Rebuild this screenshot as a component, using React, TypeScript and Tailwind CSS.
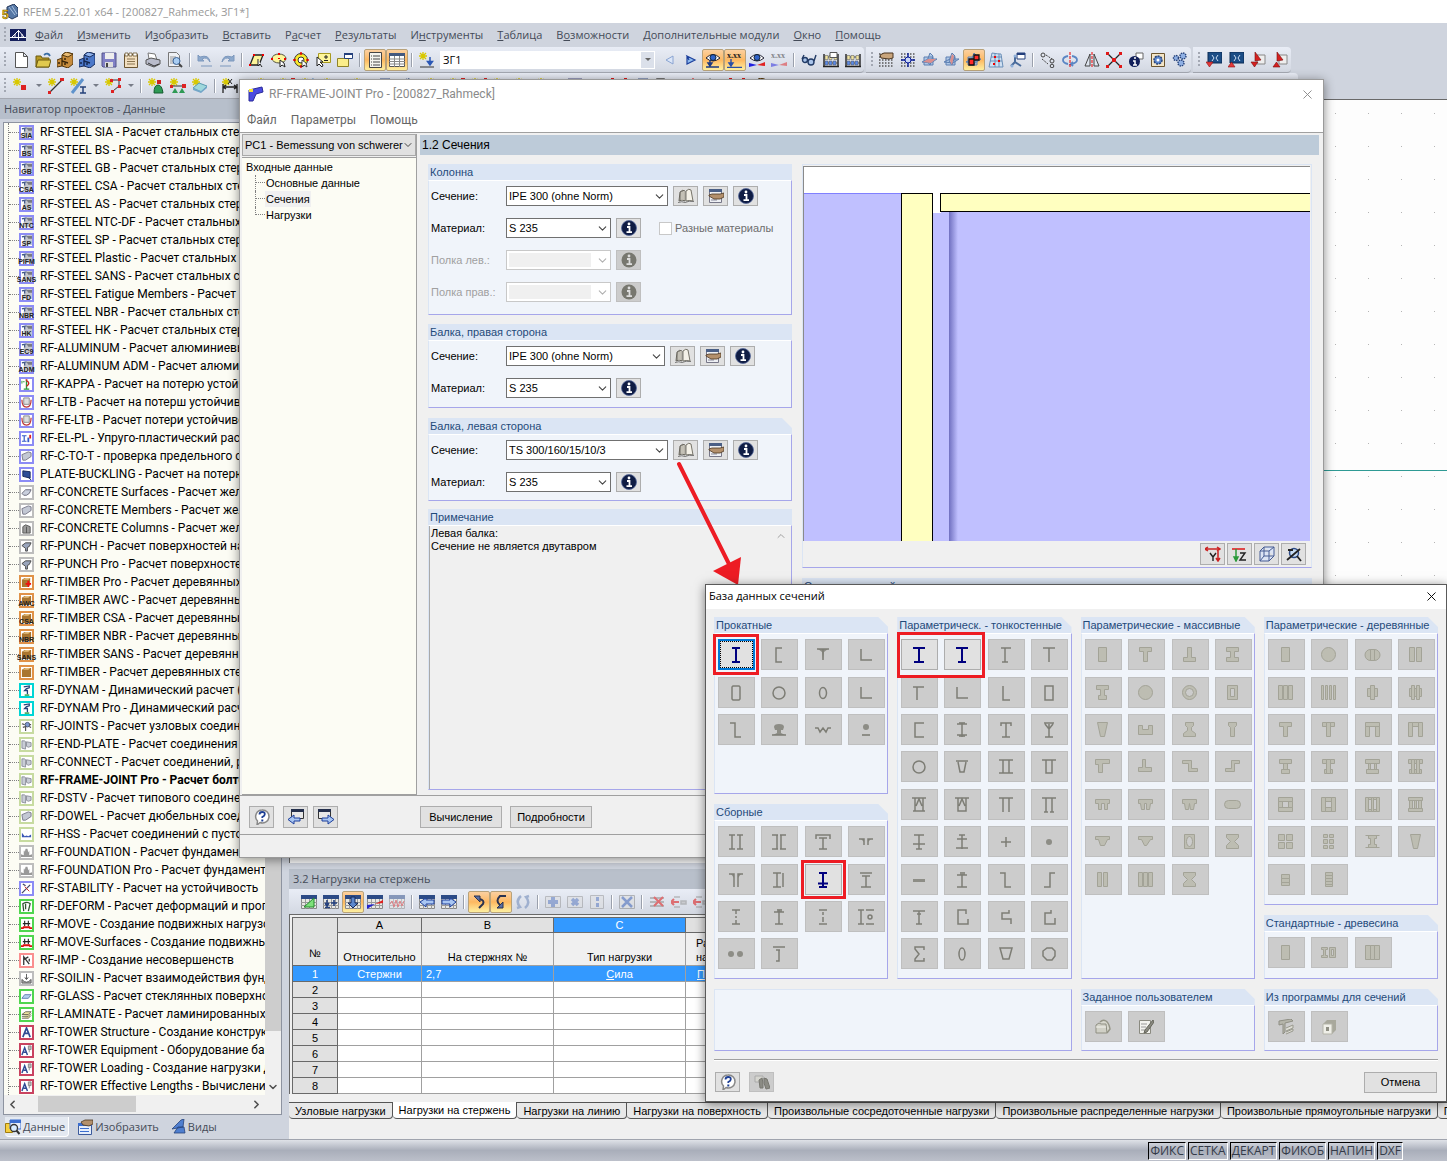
import React from 'react';
import { ChevronDown, ChevronLeft, ChevronRight, ChevronUp, X } from 'lucide-react';

/* ---------- toolbar glyphs, 16x16 ---------- */

const star = <path d="M4 0v8M0 4h8M1 1l6 6M7 1L1 7" stroke="#d8c800" strokeWidth="1.3" />;
const eye = (
  <>
    <path d="M1 6Q8-1 15 6Q8 12 1 6Z" fill="#fff" stroke="#223" />
    <circle cx="8" cy="5.5" r="3" fill="#2f62c8" stroke="#123" />
  </>
);
const sheet = (
  <>
    <path d="M.5 1.5h15v13h-15z" fill="#e8e8e4" stroke="#888" />
    <path d="M0 1h16v4H0z" fill="#2b4a86" />
    <path d="M0 8.5h16M0 11.5h16M4.500 5v10M8.500 5v10M12.500 5v10" stroke="#9a9a9a" />
  </>
);
const abacus = (
  <>
    <path d="M1 2v13M15 2v13M0 14.500h16" stroke="#222" strokeWidth="1.4" />
    <path d="M1 5h14M1 11h14" stroke="#444" />
    <g stroke="#555" strokeWidth=".5">
      <path d="M2 3.500h3v4H2zM6 3.500h3v4H6zM11 3.500h3v4h-3z" fill="#f0e3a0" />
      <path d="M2 9h3v4H2zM6 9h3v4H6zM10 9h3v4h-3z" fill="#5b8be8" />
    </g>
  </>
);
const dotGrid = <path d="M1 2h15M1 5h15M1 8h15M1 11h15M1 14h15" stroke="#555" strokeWidth="1.4" strokeDasharray="1.5 1.500" />;
const plane = (
  <path d="M2 5h9v8H2zM5 9l3-8 3 3-3 9zM0 10l6-3h9l-6 4z" fill="#9dbde6" fillOpacity=".7" stroke="#5c7fb2" />
);
const monitor = <path d="M2 0h14v11H2z" fill="#1b4d86" stroke="#0d2c55" />;

const icons: Record<string, React.ReactNode> = {
  new: <path d="M2.500.5h8l4 4v11h-12zM10.500.5v4h4" fill="#fff" stroke="#555" />,
  open: (
    <>
      <path d="M1 4h5l1 2h7v9H1z" fill="#b79a24" stroke="#6c5a10" />
      <path d="M1 15l2-7h13l-2 7z" fill="#e0c94e" stroke="#6c5a10" />
      <path d="M9 3q4-3 6 1" stroke="#3a6ea5" strokeWidth="1.8" fill="none" />
    </>
  ),
  drawer: (
    <>
      <path d="M0 8l5-2v8l-5 1zM5 3l4-3 7 2v10l-5 4-6-2z" fill="#c78c3c" stroke="#54380f" />
      <path d="M5 3l6 2 5-3-7-2z" fill="#e8bb74" stroke="#54380f" />
      <path d="M5 9l6 2M7 7h2M7 12h2M1 11h2" stroke="#3a2508" strokeWidth="1.400" />
    </>
  ),
  drawerBlue: (
    <>
      <path d="M0 8l5-2v8l-5 1zM5 3l4-3 7 2v10l-5 4-6-2z" fill="#4b78c9" stroke="#1a2f5e" />
      <path d="M5 3l6 2 5-3-7-2z" fill="#8fb2ec" stroke="#1a2f5e" />
      <path d="M5 9l6 2M7 7h2M7 12h2M1 11h2" stroke="#14264e" strokeWidth="1.400" />
    </>
  ),
  save: (
    <>
      <path d="M1 1h14v14H2l-1-1z" fill="#8181c6" stroke="#55558c" />
      <path d="M4 1h9v6H4z" fill="#eee" />
      <path d="M4 10h8v5H4z" fill="#ddd" />
      <path d="M5 11h2v4H5z" fill="#444" />
    </>
  ),
  clipboard: (
    <>
      <path d="M1.500 2.500h13v13h-13z" fill="#f2dfc0" stroke="#6b5530" />
      <path d="M2 1h3v3H2zM6 1h3v3H6zM10 1h4v3h-4z" fill="#fff" stroke="#6b5530" strokeWidth=".8" />
      <path d="M4 7h8M4 9.500h8M4 12h8" stroke="#8a7550" />
    </>
  ),
  print: (
    <>
      <path d="M3 1l7 1 2 6-8-1z" fill="#fff" stroke="#777" />
      <path d="M1 8l5-2 9 2v4l-6 3-8-3z" fill="#b9bccb" stroke="#555" />
      <path d="M3 11l6 3 5-2" stroke="#333" fill="none" />
    </>
  ),
  preview: (
    <>
      <path d="M1.500.5h8l3 3v11h-11z" fill="#eef0f4" stroke="#777" />
      <path d="M3 5h6M3 7h4M3 9h3M3 11h4" stroke="#999" />
      <circle cx="9.500" cy="9" r="3.500" fill="#a9cdf2" stroke="#3b6294" />
      <path d="M12 12l3 3" stroke="#444" strokeWidth="2" />
    </>
  ),
  dataTab: (
    <>
      <path d="M.5 4.500h7v9h-7z" fill="#f6cf3e" stroke="#a07c10" />
      <path d="M5 1h11v9H5z" fill="#e6eefb" stroke="#3b6ed0" />
      <path d="M5 1h11v3H5z" fill="#3b6ed0" />
      <circle cx="9" cy="9" r="3.500" fill="#d8ecff" stroke="#333" strokeWidth="1.300" />
      <path d="M11.500 11.500l3 3.500" stroke="#333" strokeWidth="2" />
    </>
  ),
  drawTab: (
    <>
      <path d="M1.500 4.500h13v11h-13z" fill="#e6eefb" stroke="#3b5a9c" />
      <path d="M1 4h14v3H1z" fill="#3b6ed0" />
      <path d="M3 9.500h9M3 12.500h9" stroke="#3b6ed0" />
      <path d="M4 3l4-2h8v4l-4 2-6-1z" fill="#b3906c" stroke="#4a3520" strokeWidth=".8" />
    </>
  ),
  undo: <path d="M1 3v6h6L5 7q5-3 8 3-1-8-10-5zM4 14h11" fill="#8da9cc" stroke="#7d98bd" />,
  redo: <path d="M15 3v6H9l2-2Q6 4 3 10 4 2 13 5zM1 14h11" fill="#8da9cc" stroke="#7d98bd" />,
  parallelogram: (
    <>
      <path d="M5 3h9l-4 10H1z" fill="#fdf59a" stroke="#222" strokeWidth="1.300" />
      <path d="M4 2h2v2H4zM13 2h2v2h-2zM0 12h2v2H0z" fill="#e00" />
      <path d="M9 7v7l2-2 2 3" fill="#fff" stroke="#222" />
    </>
  ),
  lasso: (
    <>
      <ellipse cx="8" cy="6.500" rx="7" ry="4.500" fill="#fdf59a" stroke="#554" />
      <path d="M7 1h2v2H7zM7 6h2v1H7zM0 6h2v2H0zM13 6h2v2h-2z" fill="#e00" />
      <path d="M9 8v7l2-2 3 2-1-4z" fill="#fff" stroke="#222" />
    </>
  ),
  target: (
    <>
      <circle cx="8" cy="8" r="6.500" fill="#fbe92a" stroke="#333" />
      <circle cx="8" cy="8" r="3" fill="#fff" stroke="#333" />
      <path d="M8 0v3M8 13v3M0 8h3M13 8h3" stroke="#e00" strokeWidth="1.500" />
      <path d="M9 8v7l2-2 3 2-1-4z" fill="#fff" stroke="#222" strokeWidth=".8" />
    </>
  ),
  selectBox: (
    <>
      <path d="M3.500 1.500h12v9h-12z" fill="#fdf59a" stroke="#a89a20" />
      <path d="M9 5h4M11 3v4M9 8.500h4" stroke="#222" />
      <path d="M2 5v9l2-2 3 3 1-2-3-3h3z" fill="#fff" stroke="#222" />
    </>
  ),
  newWindow: (
    <>
      <path d="M.5 6.500h11v8H.5z" fill="#fbee8a" stroke="#8f8328" />
      <path d="M7.500 1.500h8v5h-8z" fill="#fff" stroke="#24407d" />
      <path d="M7 1h9v2H7z" fill="#24407d" />
    </>
  ),
  listPane: (
    <>
      <path d="M2.500.5h12v15h-12z" fill="#f4f4ee" stroke="#444" />
      <path d="M4 4h1M4 7h1M4 10h1M4 13h1M6 4h7M6 7h7M6 10h7M6 13h7" stroke="#444" />
    </>
  ),
  tablePane: (
    <>
      <path d="M.5 1.500h15v13H.5z" fill="#fff" stroke="#555" />
      <path d="M0 1h16v3H0z" fill="#44597f" />
      <path d="M0 7h16M0 9.500h16M0 12h16M5.500 4v11M10.500 4v11" stroke="#888" />
    </>
  ),
  newLoad: (
    <>
      {star}
      <path d="M11 5v7M8.500 9.500L11 13l2.500-3.500z" stroke="#2a57b5" fill="#2a57b5" strokeWidth="1.500" />
      <path d="M1 15h14" stroke="#333" />
    </>
  ),
  prev: <path d="M12 4v8L5 8z" fill="#dbe6f8" stroke="#8aa4d2" />,
  next: <path d="M4 4v8l8-4-8-4 2 4z" fill="#8fbcf0" stroke="#1c3f9c" strokeWidth="1.200" />,
  eyeLoad: (
    <>
      {eye}
      <path d="M5 8v5M3 11l2 3 2-3zM1 15h13" stroke="#1d3a80" strokeWidth="1.400" />
    </>
  ),
  valueLoad: (
    <>
      <text x="0" y="6" fontSize="8" fontWeight="700" fontFamily="Liberation Serif, serif" fill="#222">x.xx</text>
      <path d="M4 7v6M2 11l2 3 2-3zM0 15.500h15" stroke="#2a4fa5" strokeWidth="1.400" />
    </>
  ),
  eyeResult: (
    <>
      {eye}
      <path d="M0 15v-4l8 2z" fill="#2222e0" />
      <path d="M16 10v4l-8-1z" fill="#e02222" />
    </>
  ),
  valueResult: (
    <g opacity=".5">
      <text x="0" y="6" fontSize="8" fontWeight="700" fontFamily="Liberation Serif, serif" fill="#222">x.xx</text>
      <path d="M0 15v-4l8 2z" fill="#2222e0" />
      <path d="M16 10v4l-8-1z" fill="#e02222" />
    </g>
  ),
  glasses: (
    <g fill="#a9c4ea" stroke="#223b66" strokeWidth="1.400">
      <circle cx="4" cy="8" r="2.500" />
      <circle cx="10" cy="10" r="3" />
      <path d="M1 7l2-4M13 9l2-6" />
    </g>
  ),
  abacusSheet: (
    <>
      {abacus}
      <path d="M7 .5h7v5H7z" fill="#fff" stroke="#555" />
    </>
  ),
  abacus,
  handGrid: (
    <>
      {dotGrid}
      <path d="M2 3l4-2h9v5l-4 1-8-1z" fill="#c9a57c" stroke="#4a3520" />
    </>
  ),
  snapGrid: (
    <>
      {dotGrid}
      <path d="M8 1v14M1 8h14" stroke="#0b1f9c" strokeWidth="1.400" />
      <circle cx="8" cy="8" r="3" fill="#c9d6f5" stroke="#0b1f9c" />
    </>
  ),
  planeXY: (
    <>
      {plane}
      <path d="M1 10l5-3h8l-5 4z" fill="#d98f8f" />
    </>
  ),
  planeYZ: (
    <>
      {plane}
      <path d="M6 9l2-7 2 2-2 9z" fill="#d98f8f" />
    </>
  ),
  planeXZ: (
    <>
      {plane}
      <path d="M3 7h5v6H3zM8 3h5v5H8z" fill="#ff2b2b" stroke="#111" strokeWidth="1.300" />
    </>
  ),
  surfaceGrid: (
    <>
      <path d="M4 1q6 1 9 1l2 13H1zM3 5h11M2 9h12M7 1v14M11 2v13" fill="#cfe0f2" stroke="#6a8fb8" />
      <path d="M6 4h2v2H6zM10 8h2v2h-2zM5 11h2v2H5z" fill="#e00" />
    </>
  ),
  nodeWindow: (
    <>
      <path d="M7 1h8v6H7z" fill="#fff" stroke="#24407d" />
      <path d="M7 1h8v2H7z" fill="#24407d" />
      <path d="M1 14l4-4V4M5 10l6 4" stroke="#4a6c9c" strokeWidth="2" fill="none" />
      <circle cx="2" cy="14" r="1.500" fill="#8fb0da" />
      <circle cx="5" cy="4" r="1.500" fill="#8fb0da" />
    </>
  ),
  move: (
    <g fill="none" stroke="#444">
      <circle cx="3" cy="3" r="2" />
      <circle cx="12" cy="9" r="2" />
      <circle cx="12" cy="14" r="1.800" />
      <path d="M6 3l6 4M2 7l6 5" strokeDasharray="2 1" />
    </g>
  ),
  rotate: (
    <>
      <path d="M6 4Q1 5 1 8t5 4M10 4q5 1 5 4t-6 4l2-2M9 12l2 2" fill="none" stroke="#5a86c4" strokeWidth="1.800" />
      <path d="M8 0v16" stroke="#e00" strokeDasharray="3 1" />
    </>
  ),
  mirror: (
    <>
      <path d="M6 2v12H1zM10 2v12h5z" fill="#dfe6f0" stroke="#444" />
      <path d="M8 0v16" stroke="#e00" strokeDasharray="3 1" />
    </>
  ),
  cross: (
    <>
      <path d="M2 2l12 12M14 2L2 14" stroke="#222" strokeWidth="1.300" />
      <path d="M0 0h3v3H0zM13 0h3v3h-3zM0 13h3v3H0zM13 13h3v3h-3zM6 6h4v4H6z" fill="#e01818" />
    </>
  ),
  infoSheet: (
    <>
      <path d="M8 1h7v6H8z" fill="#fff" stroke="#666" />
      <circle cx="6.500" cy="9.500" r="5.500" fill="#12205a" />
      <path d="M5 9h2v4M5 13h4M6 6h2" stroke="#fff" strokeWidth="1.500" fill="none" />
    </>
  ),
  gearSheet: (
    <>
      <path d="M1.500 1.500h13v13h-13z" fill="#f4e6c8" stroke="#6b5530" />
      <circle cx="8" cy="8" r="4" fill="#5b86cc" stroke="#26427a" strokeWidth="1.500" strokeDasharray="2 1" />
      <circle cx="8" cy="8" r="1.500" fill="#fff" />
    </>
  ),
  gears: (
    <g fill="#8fb0e4" stroke="#26427a" strokeDasharray="1.500 .8" strokeWidth="1.400">
      <circle cx="4" cy="6" r="2.500" />
      <circle cx="11" cy="4" r="3" />
      <circle cx="9" cy="11" r="3" />
    </g>
  ),
  viewIn: (
    <>
      {monitor}
      <path d="M6 3l2 3-2 3M12 3l-2 3 2 3" stroke="#cfe0f5" fill="none" />
      <path d="M0 10h7l-3.500 5z" fill="#e43a3a" stroke="#8d1212" strokeWidth=".6" />
    </>
  ),
  viewOut: (
    <>
      {monitor}
      <path d="M6 3l2 3-2 3M12 3l-2 3 2 3" stroke="#cfe0f5" fill="none" />
      <path d="M0 15h7l-3.500-5z" fill="#e43a3a" stroke="#8d1212" strokeWidth=".6" />
    </>
  ),
  coneIn: (
    <>
      <path d="M7 3h8v9H7z" fill="#eee" stroke="#888" />
      <path d="M5 0v9l6-1zM1 10h7l-3.500 5z" fill="#d42020" stroke="#7a0e0e" strokeWidth=".6" />
    </>
  ),
  coneOut: (
    <>
      <path d="M7 3h8v9H7z" fill="#eee" stroke="#888" />
      <path d="M5 0v9l6-1zM1 15h7l-3.500-5z" fill="#d42020" stroke="#7a0e0e" strokeWidth=".6" />
    </>
  ),
  node: (
    <>
      {star}
      <path d="M8 7h5v5H8z" fill="#d22" />
    </>
  ),
  line: (
    <>
      {star}
      <path d="M2 14L14 2" stroke="#333" strokeWidth="1.300" />
      <path d="M0 13h3v3H0zM12 0h4v3h-4z" fill="#d22" />
    </>
  ),
  member: (
    <>
      {star}
      <path d="M2 15L13 1" stroke="#5f93cc" strokeWidth="3" />
      <path d="M10 9h6M10 15h6M13 9v6" stroke="#26427a" strokeWidth="1.500" />
    </>
  ),
  polyline: (
    <>
      {star}
      <path d="M7 2h7v6l-6 5" stroke="#333" fill="none" />
      <path d="M5 1h3v3H5zM13 0h3v3h-3zM13 7h3v3h-3zM6 12h3v3H6z" fill="#d22" />
    </>
  ),
  support: (
    <>
      {star}
      <path d="M9 2h4v4H9z" fill="#c22" />
      <path d="M6 15q0-8 4-8t5 8z" fill="#2f9a55" stroke="#155c30" />
    </>
  ),
  lineSupport: (
    <>
      {star}
      <path d="M2 8h12" stroke="#333" />
      <path d="M0 7h3v3H0zM12 6h4v4h-4z" fill="#d22" />
      <path d="M2 15l3-5 3 5zM9 15l3-5 3 5z" fill="#2f9a55" />
    </>
  ),
  surface: (
    <>
      {star}
      <path d="M1 10l6-5 8 3-6 6z" fill="#9fd8dc" stroke="#5a9bb0" />
      <path d="M1 10l8 3 6-5v2l-6 5-8-3z" fill="#74a7c9" />
    </>
  ),
  dimension: (
    <>
      {star}
      <path d="M1 15V6M15 15V6M1 9h14M4 7L1 9l3 2M12 7l3 2-3 2" stroke="#222" fill="none" strokeWidth="1.300" />
      <path d="M6 1l4 5M10 1L6 6" stroke="#222" />
    </>
  ),
  help: (
    <>
      <path d="M8 1a6.500 6.500 0 1 1-2 12.500L3 16l.500-4A6.500 6.500 0 0 1 8 1z" fill="#fff" stroke="#888" strokeWidth="1.500" />
      <path d="M5.500 5.500q0-2.500 2.700-2.500t2.600 2.200q0 1.500-2.500 2.800v1" fill="none" stroke="#1e3f94" strokeWidth="1.800" />
      <path d="M7.300 10.500h2v2h-2z" fill="#1e3f94" />
    </>
  ),
  pagePrev: (
    <>
      <path d="M3.500.5h12v9h-12z" fill="#e8e8e8" stroke="#333" />
      <path d="M3 0h13v3H3z" fill="#25304d" />
      <path d="M6 6v3h6v3H6v3L0 10.500z" fill="#a9c6f2" stroke="#1c3f9c" />
    </>
  ),
  pageNext: (
    <>
      <path d="M.5.5h12v9H.5z" fill="#e8e8e8" stroke="#333" />
      <path d="M0 0h13v3H0z" fill="#25304d" />
      <path d="M10 6v3H4v3h6v3l6-4.500z" fill="#a9c6f2" stroke="#1c3f9c" />
    </>
  ),
  book: (
    <>
      <path d="M2 4q3-3 5-1v10q-3-2-6 0z" fill="#9a978e" stroke="#6a675f" />
      <path d="M8 3q3-3 5-1l2 11q-4-1-7 0z" fill="#f4f1e8" stroke="#77746a" />
      <path d="M4 4v8M6 3v9" stroke="#eeeade" />
      <path d="M0 14.500q4-1.500 7 0 4-2 9-1" stroke="#777" fill="none" />
    </>
  ),
  handList: (
    <>
      <path d="M1.500 1.500h12v13h-12z" fill="#eef0f4" stroke="#778" />
      <path d="M1 1h13v3H1z" fill="#4a5f86" />
      <path d="M3 12h6" stroke="#889" />
      <path d="M1 7l3-1h8l4-1v4l-4 2H6L1 8z" fill="#b3906c" stroke="#4a3520" strokeWidth=".8" />
    </>
  ),
  info: (
    <>
      <circle cx="8" cy="8" r="7.500" fill="#0f1c44" stroke="#55689b" strokeWidth=".8" />
      <path d="M6 7h2.500v5M5.500 12.200h5.500" stroke="#fff" strokeWidth="1.800" fill="none" />
      <circle cx="8" cy="4" r="1.400" fill="#fff" />
    </>
  ),
  infoOff: (
    <>
      <circle cx="8" cy="8" r="7.500" fill="#77776f" />
      <path d="M6 7h2.500v5M5.500 12.200h5.500" stroke="#ddd" strokeWidth="1.800" fill="none" />
      <circle cx="8" cy="4" r="1.400" fill="#ddd" />
    </>
  ),
  axisY: (
    <>
      <path d="M0 3h15M3 1L0 3l3 2M12 1l3 2-3 2M13 5v9M11 12l2 3 2-3" stroke="#c22" strokeWidth="1.500" fill="none" />
      <path d="M5 7l3 4 3-4M8 11v4" stroke="#222" fill="none" strokeWidth="1.400" />
    </>
  ),
  axisZ: (
    <>
      <path d="M0 3h13" stroke="#d22" strokeWidth="1.600" />
      <path d="M4 3v9M2 11l2 4 2-4z" stroke="#2a9a3a" strokeWidth="1.500" fill="#2a9a3a" />
      <path d="M8 7h5l-5 7h6" stroke="#222" fill="none" strokeWidth="1.400" />
    </>
  ),
  cube: <path d="M1 5h9v10H1zM1 5l4-4h10v9l-5 5M10 5l5-4M5 1v9h10M5 10l-4 5" fill="#dce4f5" stroke="#465d94" />,
  zoomOff: (
    <>
      <circle cx="8" cy="7" r="4.500" fill="#c7dcf4" stroke="#2d4a85" strokeWidth="1.500" />
      <path d="M11 10l4 5M1 14L14 3M2 4h5" stroke="#222" strokeWidth="1.800" />
    </>
  ),
  sheetTriangle: (
    <>
      {sheet}
      <path d="M3 13L13 4v9z" fill="#7ee07a" stroke="#228a2a" />
    </>
  ),
  sheetPlus: (
    <>
      {sheet}
      <path d="M4 6v5M2 9l2 3 2-3M2 13.500h5M8 9h6M11 6v6" stroke="#24407d" strokeWidth="1.600" fill="none" />
    </>
  ),
  sheetDown: (
    <>
      {sheet}
      <path d="M6 3h4v6h3l-5 5-5-5h3z" fill="#5b86cc" stroke="#16295a" />
    </>
  ),
  sheetDiagram: (
    <>
      {sheet}
      <path d="M0 15v-4l8-1z" fill="#22c" />
      <path d="M8 10l8-4v3z" fill="#d22" />
    </>
  ),
  sheetWave: (
    <g opacity=".5">
      {sheet}
      <path d="M1 10l2-3 2 6 2-7 2 7 2-6 2 5 2-5" fill="none" stroke="#d22" />
    </g>
  ),
  sheetLeft: (
    <>
      {sheet}
      <path d="M7 4v2h8v4H7v3L1 8z" fill="#a9c6f2" stroke="#1c3f9c" />
    </>
  ),
  sheetRight: (
    <>
      {sheet}
      <path d="M9 4v2H1v4h8v3l6-5z" fill="#a9c6f2" stroke="#1c3f9c" />
    </>
  ),
  hookRight: (
    <>
      <path d="M8 5q6 1 4 5l-4 4" fill="none" stroke="#2b3350" strokeWidth="2" />
      <path d="M3 2h6v6z" fill="#5b6fa5" stroke="#2b3350" />
    </>
  ),
  hookLeft: (
    <>
      <path d="M13 2H7q-5 5 0 9" fill="none" stroke="#2b3350" strokeWidth="2" />
      <path d="M4 14l6-6v6z" fill="#5b6fa5" stroke="#2b3350" />
    </>
  ),
  sync: <path d="M6 2Q0 7 5 13l-3 1M10 14q6-5 1-11l3-1" fill="none" stroke="#9fb0cf" strokeWidth="2.500" />,
  cellPlus: (
    <g opacity=".45">
      <path d="M.5 2.500h15v11H.5z" fill="#ddd" stroke="#888" />
      <path d="M8 3v10M3 8h10" stroke="#3d62b5" strokeWidth="4" />
    </g>
  ),
  cellCross: (
    <g opacity=".45">
      <path d="M.5 2.500h15v11H.5z" fill="#ddd" stroke="#888" />
      <path d="M5 5l6 6M11 5l-6 6" stroke="#3d62b5" strokeWidth="3.500" />
    </g>
  ),
  cellSplit: (
    <g opacity=".45">
      <path d="M1.500 1.500h13v13h-13z" fill="#ddd" stroke="#888" />
      <path d="M7 3h3v4H7zM7 9h3v4H7z" fill="#3d62b5" />
    </g>
  ),
  cellClear: (
    <g opacity=".55">
      <path d="M.5 1.500h15v13H.5z" fill="#ddd" stroke="#888" />
      <path d="M3 3l10 10M13 3L3 13" stroke="#3d62b5" strokeWidth="2.500" />
    </g>
  ),
  rowDelete: (
    <g opacity=".6">
      <path d="M1 4h14M1 8h14M1 12h14" stroke="#999" strokeWidth="2" />
      <path d="M5 3l9 9M14 3l-9 9" stroke="#d22" strokeWidth="2" />
    </g>
  ),
  rowLeft: (
    <g opacity=".6">
      <path d="M3 3h6M3 13h6M10 7h5v3h-5z" stroke="#999" fill="#bbb" strokeWidth="1.500" />
      <path d="M0 8h8M3 5L0 8l3 3" stroke="#d22" fill="none" strokeWidth="2" />
    </g>
  ),
  finder: (
    <>
      <path d="M1 2h8v6H1z" fill="#d6d6d0" stroke="#aaa" />
      <path d="M5 6l3-2 1 5v5H6zM10 4l3 1 3 9-4 1-2-6z" fill="#8b8b84" stroke="#777770" />
    </>
  ),
  folderBack: (
    <>
      <path d="M5 3q3-3 6-1t4 8l-3 4" fill="#d8d8ce" stroke="#969688" strokeWidth="1.500" />
      <path d="M1 6l3-2 2 1h5l1 9H1z" fill="#d0d0c6" stroke="#8f8f82" />
      <path d="M1 8h10" stroke="#f4f4ee" />
    </>
  ),
  editSheet: (
    <>
      <path d="M1.500 1.500h11v13h-11z" fill="#f3f3ee" stroke="#8a8a80" />
      <path d="M3 5h6M3 8h5M3 11h4" stroke="#999" />
      <path d="M15 1L7 11l-1 3 3-1 7-10z" fill="#8a8a80" stroke="#66665c" />
    </>
  ),
  profile: (
    <>
      <path d="M1 2l12-2 2 2-8 2v9l-2 2V5L1 6z" fill="#b5b5aa" stroke="#8f8f84" />
      <path d="M8 9l7-3v3l-7 3M8 13l7-3v2l-7 3" fill="#deded6" stroke="#99998e" />
    </>
  ),
  hollow: (
    <>
      <path d="M2 5l4-4h9v10l-4 4H2z" fill="#a8a89c" />
      <path d="M2 5h9v10H2z" fill="#efefe8" stroke="#b5b5aa" />
      <path d="M5 8h3v4H5z" fill="#8f8f84" />
    </>
  ),
};

function Glyph({ name }: { name: string }) {
  return (
    <svg viewBox="0 0 16 16" className="h-4 w-4 shrink-0" fill="none" aria-hidden="true">
      {icons[name]}
    </svg>
  );
}

interface ToolProps {
  name: string;
  active?: boolean;
}

function Tool({ name, active }: ToolProps) {
  return (
    <button
      aria-label={name}
      className={`flex h-[22px] w-[22px] shrink-0 items-center justify-center ${
        active ? 'rounded-xs border border-[#b8a27a] bg-gradient-to-b from-[#fbd0a0] via-[#fdb860] to-[#fdf0a0]' : ''
      }`}
    >
      <Glyph name={name} />
    </button>
  );
}

function Separator() {
  return <div className="mx-[3px] h-[14px] w-[2px] shrink-0 border-l border-[#9aa0ac] bg-white" />;
}

function Grip() {
  return <div className="h-4 w-[2px] shrink-0 bg-[repeating-linear-gradient(to_bottom,#a3a8b3_0_2px,transparent_2px_4px)]" />;
}

/* '|' draws a separator, a leading '*' marks a pressed tool, 'v' a small drop arrow */
function Tools({ items }: { items: string[] }) {
  return (
    <>
      {items.map((item, i) => {
        if (item === '|') return <Separator key={i} />;
        if (item === 'v')
          return (
            <span key={i} className="flex w-[13px] shrink-0 justify-center">
              <span className="border-x-[3px] border-t-[3px] border-x-transparent border-t-[#777c88]" />
            </span>
          );
        const active = item.startsWith('*');
        return <Tool key={i} name={active ? item.slice(1) : item} active={active} />;
      })}
    </>
  );
}

const bar = 'flex shrink-0 items-center rounded-r-sm border-b border-[#a4a8b1] bg-gradient-to-b from-[#e9edf6] to-[#d3d8e2]';

const menu: [string, string, string][] = [
  ['', 'Ф', 'айл'],
  ['', 'И', 'зменить'],
  ['И', 'з', 'образить'],
  ['', 'В', 'ставить'],
  ['Р', 'а', 'счет'],
  ['', 'Р', 'езультаты'],
  ['И', 'н', 'струменты'],
  ['', 'Т', 'аблица'],
  ['В', 'о', 'зможности'],
  ['', 'Д', 'ополнительные модули'],
  ['', 'О', 'кно'],
  ['', 'П', 'омощь'],
];

function MainHeader() {
  return (
    <header>
      <div className="flex h-[23px] items-center gap-[5px] bg-white pl-[2px] text-[#999]">
        <svg viewBox="0 0 16 16" className="h-4 w-4">
          <path d="M5 3l7-3 4 4v8l-6 3-5-3z" fill="#5577a5" stroke="#263a5c" />
          <path d="M7 3l6 8M10 2l5 8" stroke="#a9c1df" />
          <text x="0" y="15" fontSize="12" fontWeight="700" fontFamily="Liberation Sans, sans-serif" fill="#f2c41a" stroke="#5a4600" strokeWidth=".5">5</text>
        </svg>
        <h1>RFEM 5.22.01 x64 - [200827_Rahmeck, ЗГ1*]</h1>
      </div>
      <nav className="flex h-6 items-center pl-[4px] text-[#444b58]">
        <Grip />
        <svg viewBox="0 0 16 12" className="mr-[9px] ml-[4px] h-3 w-4">
          <path d="M0 0h16v12H0z" fill="#16205c" />
          <path d="M0 8.500h16M8.500 1v10M8 2L2 8M9 2l5 6M5 5v3M12 5v3" stroke="#fff" fill="none" />
        </svg>
        <div className="flex gap-[14px] text-[11px] whitespace-nowrap">
          {menu.map(([before, key, after]) => (
            <button key={before + key + after}>
              {before}
              <u>{key}</u>
              {after}
            </button>
          ))}
        </div>
      </nav>
      <div className="flex h-[26px] gap-[2px] overflow-hidden">
        <div className={`${bar} w-[864px]`}>
          <div className="w-[4px]" />
          <Grip />
          <div className="w-[4px]" />
          <Tools items={['new', 'open', 'drawer', 'drawerBlue', 'save', 'clipboard', 'print', 'preview', '|', 'undo', 'redo', '|', 'parallelogram', 'lasso', 'target', 'selectBox', 'newWindow', '|', '*listPane', '*tablePane', '|', 'newLoad']} />
          <div className="relative mr-[3px] ml-[2px] flex h-[18px] min-w-0 flex-1">
            <select aria-label="Загружение" className="w-full appearance-none bg-white pl-[3px] text-[11px] text-black">
              <option>ЗГ1</option>
            </select>
            <span className="pointer-events-none absolute top-px right-px bottom-px flex w-[13px] items-center justify-center bg-[#dbe0ea]">
              <span className="border-x-[3px] border-t-[3px] border-x-transparent border-t-[#666]" />
            </span>
          </div>
          <Tools items={['prev', 'next', '*eyeLoad', '*valueLoad', 'eyeResult', 'valueResult', '|', 'glasses', 'abacusSheet', 'abacus']} />
        </div>
        <div className={`${bar} pl-[5px]`}>
          <Grip />
          <div className="w-[2px]" />
          <Tools items={['handGrid', 'snapGrid', 'planeXY', 'planeYZ', '*planeXZ', 'surfaceGrid', 'nodeWindow', '|', 'move', 'rotate', 'mirror', 'cross', 'infoSheet', 'gearSheet', 'gears']} />
        </div>
        <div className={`${bar} pl-[5px]`}>
          <Grip />
          <div className="w-[3px]" />
          <Tools items={['viewIn', 'viewOut', 'coneIn', 'coneOut']} />
        </div>
      </div>
      <div className="flex h-[26px] overflow-hidden">
        <div className={`${bar} w-[1298px]`}>
          <div className="w-[4px]" />
          <Grip />
          <div className="w-[4px]" />
          <Tools items={['node', 'v', 'line', 'member', 'v', 'polyline', 'v', '|', 'support', 'lineSupport', 'surface', '|', 'dimension', 'v', 'node', 'line', 'member', 'support', '|', 'surface', 'cube', 'gears', '|', 'node', 'line', 'polyline', 'support', 'surface', 'newLoad', '|', 'save', 'planeXZ', 'cross', 'cube', 'preview', '|', 'mirror', 'move', 'cross', 'drawer']} />
        </div>
      </div>
    </header>
  );
}

/* ---------- project navigator ---------- */

const frames = {
  steel: 'border-[#8c8cf5]',
  concrete: 'border-[#bdbdbd]',
  timber: 'border-[#e09248]',
  dynam: 'border-[#00d5d5]',
  joint: 'border-[#c7dba0]',
  green: 'border-[#4fd64f]',
  imp: 'border-[#fa8f8f]',
  tower: 'border-[#c94360]',
};

const moduleArt: Record<string, React.ReactNode> = {
  beam: (
    <>
      <path d="M6 0h6v11H3V5z" fill="#c4c6cc" />
      <path d="M6 1h6v3H8z" fill="#777a82" />
      <path d="M1 2l5-1M4 2v3" stroke="#3f5688" strokeWidth="1.400" />
    </>
  ),
  wood: (
    <>
      <path d="M1 3l3-2h7v10H1z" fill="#a9752f" />
      <path d="M2 3l3-2h5L8 3z" fill="#e3bd7c" />
    </>
  ),
  woodPlus: (
    <>
      <path d="M1 3l3-2h6v8l-3 2H1z" fill="#a9752f" />
      <path d="M2 3l3-2h5L8 3z" fill="#e3bd7c" />
      <path d="M8 4v7M5 7.500h6" stroke="#e11" strokeWidth="2" />
    </>
  ),
  kappa: (
    <>
      <path d="M6 1v10M3 11h6" stroke="#2a9a3a" strokeWidth="1.500" />
      <path d="M6 2q5 2 0 6M5 1h2" stroke="#c22" strokeWidth="1.500" fill="none" />
      <path d="M1 2v3M2 3h2" stroke="#2a9a3a" />
    </>
  ),
  ltb: (
    <>
      <path d="M3 1h6v7H3z" fill="#ddd" stroke="#888" />
      <path d="M1 3q0 8 5 8t5-8" stroke="#b33" fill="none" strokeWidth="1.300" />
    </>
  ),
  elpl: (
    <>
      <path d="M1 3h5M1 9h5M3.500 3v6" stroke="#3358c8" strokeWidth="1.300" />
      <path d="M7 5h2v5H7z" fill="#3358c8" />
      <path d="M9 2h2v4H9z" fill="#d22" />
    </>
  ),
  plate: <path d="M2 2l8 1v7l-8-2zM8 9l3 3" fill="#2c4d96" stroke="#16295a" />,
  slab: <path d="M1 7l4-4h6l-2 4-3 2H3z" fill="#c9cfdd" stroke="#667" />,
  member: <path d="M1 4l7-3 3 1v4L5 10H2z" fill="#c3c8d4" stroke="#778" />,
  column: <path d="M2 4l3-2 5 2v7H2zM6 4v7" fill="#9a9a9a" stroke="#555" />,
  punch: <path d="M1 5l4-3h6l-2 4-2 1v4H5V8z" fill="#9aa5bd" stroke="#444" />,
  dynam: (
    <>
      <path d="M3 2l6-1v2L6 4 4 6h3v4" fill="none" stroke="#26427a" strokeWidth="1.400" />
      <path d="M4 11h5" stroke="#2a9a3a" strokeWidth="1.500" />
    </>
  ),
  joint: (
    <>
      <circle cx="7" cy="4" r="2.500" fill="#7f9ad0" stroke="#44557a" />
      <path d="M1 3l3 1M2 7l3-1v5M9 6l2 1M11 4H9" stroke="#555" strokeWidth="1.300" />
    </>
  ),
  plateEnd: <path d="M1 2h3l1 1v8l-4-1zM6 3l5 1v4L8 9 6 8z" fill="#c9cdd6" stroke="#777c88" strokeWidth=".8" />,
  hss: <path d="M1 9h10V6L8 8 6 7 4 8 1 4z" fill="#3b57b5" />,
  foundation: <path d="M0 11V8l3 1V4h1v2l1-4h2l1 4 1-2v5l3-1v3z" fill="#999" />,
  stability: (
    <>
      <path d="M1 11l9-9M2 1l3 2" stroke="#446" strokeWidth="1.400" />
      <path d="M4 4l5 5" stroke="#c22" />
    </>
  ),
  deform: <path d="M3 11L2 3q5-3 8 0L8 11M5 3v6" stroke="#353" strokeWidth="1.400" fill="none" />,
  move: (
    <>
      <path d="M4 2v6M8 2v6M2 5h8" stroke="#222" strokeWidth="1.200" />
      <path d="M0 10h3M9 10h3M2 9h8" stroke="#d11" strokeWidth="2" />
    </>
  ),
  imp: <path d="M3 11V2l6 8M3 5l5-3M9 4v3" stroke="#333" strokeWidth="1.400" fill="none" />,
  soil: <path d="M1 7q5 6 10 0v4H1zM6 1v6M4 5l2 2 2-2" fill="#aaa" stroke="#555" />,
  glass: <path d="M1 8l3-4h7L8 8z" fill="#b5d0f0" stroke="#5f80b0" />,
  laminate: <path d="M1 6l4-3h6L8 6zM1 8h7l3-3M1 10h7l3-3" fill="#f0e6a0" stroke="#665" />,
  tower: <path d="M2 11L6 1l4 10M4 7h4" stroke="#2f4a94" strokeWidth="1.800" fill="none" />,
  towerSmall: (
    <>
      <path d="M1 11L4 3l3 8M3 8h3" stroke="#2f4a94" strokeWidth="1.600" fill="none" />
      <path d="M8 1h3v4H8zM9 5v3" stroke="#888" fill="#bbb" />
    </>
  ),
};

interface Module {
  name: string;
  frame: keyof typeof frames;
  art: string;
  tag?: string;
  current?: boolean;
}

const modules: Module[] = [
  { name: 'RF-STEEL SIA - Расчет стальных стержней', frame: 'steel', art: 'beam', tag: 'SIA' },
  { name: 'RF-STEEL BS - Расчет стальных стержней', frame: 'steel', art: 'beam', tag: 'BS' },
  { name: 'RF-STEEL GB - Расчет стальных стержней', frame: 'steel', art: 'beam', tag: 'GB' },
  { name: 'RF-STEEL CSA - Расчет стальных стержней', frame: 'steel', art: 'beam', tag: 'CSA' },
  { name: 'RF-STEEL AS - Расчет стальных стержней', frame: 'steel', art: 'beam', tag: 'AS' },
  { name: 'RF-STEEL NTC-DF - Расчет стальных стержней', frame: 'steel', art: 'beam', tag: 'NTC' },
  { name: 'RF-STEEL SP - Расчет стальных стержней', frame: 'steel', art: 'beam', tag: 'SP' },
  { name: 'RF-STEEL Plastic - Расчет стальных стержней', frame: 'steel', art: 'beam', tag: 'PIFM' },
  { name: 'RF-STEEL SANS - Расчет стальных стержней', frame: 'steel', art: 'beam', tag: 'SANS' },
  { name: 'RF-STEEL Fatigue Members - Расчет на усталость', frame: 'steel', art: 'beam', tag: 'FD' },
  { name: 'RF-STEEL NBR - Расчет стальных стержней', frame: 'steel', art: 'beam', tag: 'NBR' },
  { name: 'RF-STEEL HK - Расчет стальных стержней', frame: 'steel', art: 'beam', tag: 'HK' },
  { name: 'RF-ALUMINUM - Расчет алюминиевых стержней', frame: 'steel', art: 'beam', tag: 'EC9' },
  { name: 'RF-ALUMINUM ADM - Расчет алюминиевых стержней', frame: 'steel', art: 'beam', tag: 'ADM' },
  { name: 'RF-KAPPA - Расчет на потерю устойчивости', frame: 'steel', art: 'kappa' },
  { name: 'RF-LTB - Расчет на потерш устойчивости', frame: 'steel', art: 'ltb' },
  { name: 'RF-FE-LTB - Расчет потери устойчивости', frame: 'steel', art: 'ltb' },
  { name: 'RF-EL-PL - Упруго-пластический расчет', frame: 'steel', art: 'elpl' },
  { name: 'RF-C-TO-T - проверка предельного состояния', frame: 'steel', art: 'member' },
  { name: 'PLATE-BUCKLING - Расчет на потерю', frame: 'steel', art: 'plate' },
  { name: 'RF-CONCRETE Surfaces - Расчет железобетонных', frame: 'concrete', art: 'slab' },
  { name: 'RF-CONCRETE Members - Расчет железобетонных', frame: 'concrete', art: 'member' },
  { name: 'RF-CONCRETE Columns - Расчет железобетонных', frame: 'concrete', art: 'column' },
  { name: 'RF-PUNCH - Расчет поверхностей на продавливание', frame: 'concrete', art: 'punch' },
  { name: 'RF-PUNCH Pro - Расчет поверхностей', frame: 'concrete', art: 'punch' },
  { name: 'RF-TIMBER Pro - Расчет деревянных стержней', frame: 'timber', art: 'woodPlus' },
  { name: 'RF-TIMBER AWC - Расчет деревянных стержней', frame: 'timber', art: 'wood', tag: 'AWC' },
  { name: 'RF-TIMBER CSA - Расчет деревянных стержней', frame: 'timber', art: 'wood', tag: 'CSA' },
  { name: 'RF-TIMBER NBR - Расчет деревянных стержней', frame: 'timber', art: 'wood', tag: 'NBR' },
  { name: 'RF-TIMBER SANS - Расчет деревянных стержней', frame: 'timber', art: 'wood', tag: 'SANS' },
  { name: 'RF-TIMBER - Расчет деревянных стержней', frame: 'timber', art: 'wood' },
  { name: 'RF-DYNAM - Динамический расчет (', frame: 'dynam', art: 'dynam' },
  { name: 'RF-DYNAM Pro - Динамический расчет', frame: 'dynam', art: 'dynam' },
  { name: 'RF-JOINTS - Расчет узловых соединений', frame: 'joint', art: 'joint' },
  { name: 'RF-END-PLATE - Расчет соединения д', frame: 'joint', art: 'plateEnd' },
  { name: 'RF-CONNECT - Расчет соединений, ра', frame: 'joint', art: 'plateEnd' },
  { name: 'RF-FRAME-JOINT Pro - Расчет болтовых', frame: 'joint', art: 'plateEnd', current: true },
  { name: 'RF-DSTV - Расчет типового соединения', frame: 'joint', art: 'plateEnd' },
  { name: 'RF-DOWEL - Расчет дюбельных соединений', frame: 'joint', art: 'member' },
  { name: 'RF-HSS - Расчет соединений с пустотелыми', frame: 'joint', art: 'hss' },
  { name: 'RF-FOUNDATION - Расчет фундаментов', frame: 'concrete', art: 'foundation' },
  { name: 'RF-FOUNDATION Pro - Расчет фундаментов', frame: 'concrete', art: 'foundation' },
  { name: 'RF-STABILITY - Расчет на устойчивость', frame: 'steel', art: 'stability' },
  { name: 'RF-DEFORM - Расчет деформаций и прогибов', frame: 'green', art: 'deform' },
  { name: 'RF-MOVE - Создание подвижных нагрузок', frame: 'green', art: 'move' },
  { name: 'RF-MOVE-Surfaces - Создание подвижных', frame: 'green', art: 'move' },
  { name: 'RF-IMP - Создание несовершенств', frame: 'imp', art: 'imp' },
  { name: 'RF-SOILIN - Расчет взаимодействия фундамента', frame: 'concrete', art: 'soil' },
  { name: 'RF-GLASS - Расчет стеклянных поверхностей', frame: 'green', art: 'glass' },
  { name: 'RF-LAMINATE - Расчет ламинированных', frame: 'green', art: 'laminate' },
  { name: 'RF-TOWER Structure - Создание конструкции', frame: 'tower', art: 'tower' },
  { name: 'RF-TOWER Equipment - Оборудование башни', frame: 'tower', art: 'towerSmall' },
  { name: 'RF-TOWER Loading - Создание нагрузки для', frame: 'tower', art: 'towerSmall' },
  { name: 'RF-TOWER Effective Lengths - Вычисление', frame: 'tower', art: 'towerSmall' },
];

function ModuleRow({ module }: { module: Module }) {
  return (
    <li className="flex h-[18px] items-center whitespace-nowrap">
      <span className="w-[10px] shrink-0 border-t border-dotted border-[#808080]" />
      <span className={`relative h-[15px] w-[15px] shrink-0 border-2 bg-white ${frames[module.frame]}`}>
        <svg viewBox="0 0 12 12" className="h-full w-full" fill="none">
          {moduleArt[module.art]}
        </svg>
        {module.tag && (
          <span className="absolute -inset-x-[6px] -bottom-[2px] text-center font-['Liberation_Sans',sans-serif] text-[7px] leading-[8px] font-bold text-[#222]">
            {module.tag}
          </span>
        )}
      </span>
      <span className={`ml-[6px] ${module.current ? 'font-bold' : ''}`}>{module.name}</span>
    </li>
  );
}

function Navigator() {
  return (
    <aside className="flex w-[285px] shrink-0 flex-col">
      <h2 className="flex h-5 items-center bg-[#b7bfcb] pl-[4px] text-[#444b58]">Навигатор проектов - Данные</h2>
      <div className="mx-[3px] mt-[3px] flex flex-1 flex-col border border-[#8d93a0] bg-[#f0f0f0]">
        <div className="flex">
          <div className="min-w-0 flex-1 overflow-hidden bg-[#fcfcf4] pl-[4px]">
            <ul className="border-l border-dotted border-[#808080] font-[Roboto,'Noto_Sans',sans-serif] text-[12px] text-black">
              {modules.map(module => (
                <ModuleRow key={module.name} module={module} />
              ))}
            </ul>
          </div>
          <div className="flex w-4 flex-col items-center justify-end">
            <div className="w-full flex-1 bg-[#cdcdcd]" />
            <div className="h-[50px]" />
            <ChevronDown size={12} className="mb-[2px]" strokeWidth={3} color="#505050" />
          </div>
        </div>
        <div className="flex h-[18px] items-center pr-[18px]">
          <ChevronLeft size={13} className="mx-[2px]" strokeWidth={3} color="#505050" />
          <div className="ml-[17px] h-4 w-[98px] bg-[#cdcdcd]" />
          <ChevronRight size={13} className="ml-auto" strokeWidth={3} color="#505050" />
        </div>
      </div>
      <div className="flex h-6 items-center gap-[8px] pl-[5px] text-[11px] text-[#444b58]">
        <button className="flex h-[20px] items-center gap-[2px] rounded-b-sm border-r border-b border-white bg-[#e4e9f1] pr-[3px]">
          <Glyph name="dataTab" />
          Данные
        </button>
        <button className="flex items-center gap-[2px]">
          <Glyph name="drawTab" />
          Изобразить
        </button>
        <button className="ml-[4px] flex items-center gap-px">
          <svg viewBox="0 0 16 16" className="h-4 w-4">
            <path d="M1 10L10 1l3-1-1 8zM7 8h6l1 6H3z" fill="#4f7fd0" stroke="#26427a" strokeWidth=".8" />
          </svg>
          Виды
        </button>
      </div>
    </aside>
  );
}

/* ---------- load table ---------- */

const loadTabs = [
  'Узловые нагрузки',
  'Нагрузки на стержень',
  'Нагрузки на линию',
  'Нагрузки на поверхность',
  'Произвольные сосредоточенные нагрузки',
  'Произвольные распределенные нагрузки',
  'Произвольные прямоугольные нагрузки',
  'Произвольные переменные нагрузки',
];

function LoadTable() {
  const cell = 'border-r border-b border-[#a0a0a0]';
  const edge = 'border-r border-b border-[#696969] font-normal';
  return (
    <section className="bg-[#f0f0f0] font-['Liberation_Sans',Arial,sans-serif] text-[11px] text-black">
      <h2 className="flex h-5 items-center bg-[#b9c0cb] pl-[4px] font-['Open_Sans','Noto_Sans',sans-serif] text-[#444b58]">3.2 Нагрузки на стержень</h2>
      <div className="flex h-[25px] items-center bg-gradient-to-b from-[#e9edf6] to-[#d3d8e2] pl-[9px]">
        <Tools items={['sheetTriangle', 'sheetPlus', '*sheetDown', 'sheetDiagram', 'sheetWave', '|', 'sheetLeft', 'sheetRight', '|', '*hookRight', '*hookLeft', 'sync', '|', 'cellPlus', 'cellCross', 'cellSplit', '|', 'cellClear', '|', 'rowDelete', 'rowLeft', 'rowLeft', 'rowDelete']} />
      </div>
      <div className="overflow-hidden border-t border-l border-[#696969] pt-[2px] pl-[2px]">
        <table className="w-[1300px] table-fixed border-separate border-spacing-0 border-t border-l border-[#696969] bg-white leading-[14px]">
          <colgroup>
            <col className="w-[45px]" />
            <col className="w-[84px]" />
            <col className="w-[132px]" />
            <col className="w-[132px]" />
            <col />
          </colgroup>
          <thead>
            <tr className="h-[15px]">
              <th rowSpan={2} className={`${edge} bg-[#e1e1e1] pt-[22px]`}>№</th>
              <th className={`${edge} bg-[#e1e1e1]`}>A</th>
              <th className={`${edge} bg-[#e1e1e1]`}>B</th>
              <th className={`${edge} bg-[#3399ff] text-white`}>C</th>
              <th className={`${edge} bg-[#e1e1e1]`}>D</th>
            </tr>
            <tr className="h-[33px] bg-[#f0f0f0] align-bottom">
              <th className={`${cell} pb-px font-normal`}>Относительно</th>
              <th className={`${cell} pb-px font-normal`}>На стержнях №</th>
              <th className={`${cell} pb-px font-normal`}>Тип нагрузки</th>
              <th className={`${cell} pb-px pl-[10px] text-left font-normal`}>
                Распр.
                <br />
                нагрузки
              </th>
            </tr>
          </thead>
          <tbody>
            <tr className="h-4 bg-[#3399ff] text-center text-white">
              <th className={edge}>1</th>
              <td className={cell}>Стержни</td>
              <td className={`${cell} pl-[4px] text-left`}>2,7</td>
              <td className={cell}>
                <u>С</u>ила
              </td>
              <td className={`${cell} pl-[11px] text-left`}>
                <u>П</u>остоянная
              </td>
            </tr>
            {[2, 3, 4, 5, 6, 7, 8].map(n => (
              <tr key={n} className="h-4">
                <th className={`${edge} bg-[#e1e1e1]`}>{n}</th>
                <td className={cell} />
                <td className={cell} />
                <td className={cell} />
                <td className={cell} />
              </tr>
            ))}
          </tbody>
        </table>
      </div>
      <div className="mt-[8px] flex h-[17px] overflow-hidden whitespace-nowrap">
        {loadTabs.map((tab, i) => (
          <button
            key={tab}
            className={`shrink-0 rounded-b-sm border-r border-b border-[#555] px-[6px] ${
              i === 1 ? 'bg-white' : 'border-t bg-[#e8e8e8]'
            }`}
          >
            {tab}
          </button>
        ))}
      </div>
      <div className="h-5" />
    </section>
  );
}

/* ---------- shared dialog parts ---------- */

const grayButton = 'flex items-center justify-center border border-[#adadad] bg-[#e1e1e1]';

function IconButton({ name, disabled }: { name: string; disabled?: boolean }) {
  return (
    <button
      aria-label={name}
      disabled={disabled}
      className="flex h-5 w-[25px] shrink-0 items-center justify-center border border-[#adadad] bg-[#e1e1e1] disabled:border-[#bfbfbf] disabled:bg-[#cccccc]"
    >
      <Glyph name={name} />
    </button>
  );
}

interface GroupProps {
  title: string;
  cut?: boolean;
  className?: string;
  children?: React.ReactNode;
}

function Group({ title, cut, className = '', children }: GroupProps) {
  return (
    <section className={`flex flex-col ${className}`}>
      <h3
        className={`flex h-4 shrink-0 items-center overflow-hidden bg-[#dbe5f4] pl-[2px] whitespace-nowrap text-[#1f4a7a] ${
          cut ? '[clip-path:polygon(0_0,calc(100%-10px)_0,100%_10px,100%_100%,0_100%)]' : ''
        }`}
      >
        {title}
      </h3>
      <div className="flex flex-1 flex-col border border-t-white border-r-[#a6a6ea] border-b-[#a6a6ea] border-l-[#dbe5f4] bg-[#f0f4fa]">
        {children}
      </div>
    </section>
  );
}

interface ComboProps {
  label: string;
  value: string;
  width: string;
  disabled?: boolean;
  children?: React.ReactNode;
}

function ComboRow({ label, value, width, disabled, children }: ComboProps) {
  return (
    <div className="flex h-5 items-center">
      <label className={`flex items-center ${disabled ? 'text-[#a0a0a0]' : ''}`}>
        <span className="w-[75px] shrink-0">{label}</span>
        <span className={`relative ${width}`}>
          <select
            disabled={disabled}
            className="h-5 w-full appearance-none border border-[#707070] bg-white pb-px pl-[2px] text-black disabled:border-[#c8c8c8] disabled:opacity-100"
          >
            <option>{value}</option>
          </select>
          {disabled && <span className="absolute top-[3px] right-[20px] bottom-[3px] left-[3px] bg-[#f0f0f0]" />}
          <ChevronDown size={13} className={`pointer-events-none absolute top-[4px] right-[2px] ${disabled ? 'text-[#b0b0b0]' : 'text-[#444]'}`} />
        </span>
      </label>
      <span className="ml-[5px] flex items-center gap-[5px]">{children}</span>
    </div>
  );
}

function SectionButtons() {
  return (
    <>
      <IconButton name="book" />
      <IconButton name="handList" />
      <IconButton name="info" />
    </>
  );
}

/* ---------- RF-FRAME-JOINT Pro window ---------- */

function JointView() {
  return (
    <svg className="h-[375px] w-full border-t border-l border-[#8a8a8a] bg-white">
      <defs>
        <linearGradient id="flange">
          <stop offset="0" stopColor="#7070c0" />
          <stop offset="1" stopColor="#c0c0ff" />
        </linearGradient>
      </defs>
      <rect y="27" width="100%" height="350" fill="#c0c0ff" />
      <path d="M0 26.500H98" stroke="#8080ff" />
      <rect x="129" y="20" width="8" height="26" fill="#fff" />
      <rect x="145" y="45" width="9" height="332" fill="url(#flange)" />
      <rect x="97.500" y="26.500" width="31" height="360" fill="#ffffc0" stroke="#000" />
      <rect x="136.500" y="26.500" width="600" height="18" fill="#ffffc0" stroke="#000" />
    </svg>
  );
}

function JointDialog() {
  return (
    <div className="absolute top-[79px] left-[239px] flex h-[779px] w-[1085px] flex-col border border-[#9a9a9a] bg-white font-['Liberation_Sans',Arial,sans-serif] text-[11px] text-black shadow-[0_2px_10px_rgba(0,0,0,0.45)]">
      <div className="flex h-[28px] items-center gap-[5px] pr-[8px] pl-[8px] font-[Roboto,'Noto_Sans',sans-serif] text-[12px] text-[#8a8a8a]">
        <svg viewBox="0 0 16 16" className="h-4 w-4">
          <path d="M1 4l13-3 1 5-7 2-3 7H1z" fill="#4b4be0" stroke="#2b2b9a" />
          <path d="M1 3h4v3H1z" fill="#f2e23a" />
        </svg>
        <h2>RF-FRAME-JOINT Pro - [200827_Rahmeck]</h2>
        <button aria-label="Закрыть" className="ml-auto">
          <X size={15} strokeWidth={1.5} />
        </button>
      </div>
      <nav className="flex h-[24px] items-center gap-[14px] pl-[7px] font-[Roboto,'Noto_Sans',sans-serif] text-[12px] text-[#666]">
        <button>Файл</button>
        <button>Параметры</button>
        <button>Помощь</button>
      </nav>
      <div className="flex min-h-0 flex-1 gap-[3px] border-t border-[#a0a0a0] bg-[#f0f0f0] pt-px pl-[2px]">
        <div className="flex w-[175px] shrink-0 flex-col border-r border-b border-[#a0a0a0]">
          <div className="relative">
            <select aria-label="Расчетный случай" className="h-[22px] w-full appearance-none border border-[#a9a9a9] bg-[#e1e1e1] pl-[2px]">
              <option>PC1 - Bemessung von schwerer</option>
            </select>
            <ChevronDown size={12} className="pointer-events-none absolute top-[5px] right-[2px] text-[#444]" />
          </div>
          <div className="mt-px flex-1 border-t border-[#a0a0a0] bg-[#fcfcf4] pt-px pl-[4px] leading-4">
            Входные данные
            <ul className="ml-[9px]">
              {['Основные данные', 'Сечения', 'Нагрузки'].map(item => (
                <li key={item} className="flex h-4 items-start">
                  <span className={`w-[10px] border-l border-dotted border-[#808080] ${item === 'Нагрузки' ? 'h-2' : 'h-4'}`}>
                    <span className="block h-2 border-b border-dotted border-[#808080]" />
                  </span>
                  <span className={`px-px ${item === 'Сечения' ? 'bg-[#f0f0f0]' : ''}`}>{item}</span>
                </li>
              ))}
            </ul>
          </div>
        </div>
        <div className="flex min-w-0 flex-1 flex-col pr-[4px]">
          <h3 className="mt-px flex h-5 shrink-0 items-center bg-[#bdcbd9] pl-[2px] text-[12px]">1.2 Сечения</h3>
          <div className="flex min-h-0 flex-1 gap-[10px] pt-[9px] pr-[7px] pl-[8px]">
            <div className="flex w-[364px] shrink-0 flex-col">
              <Group title="Колонна" className="mb-[9px]">
                <div className="flex flex-col gap-3 px-[2px] pt-[5px] pb-3">
                  <ComboRow label="Сечение:" value="IPE 300 (ohne Norm)" width="w-[162px]">
                    <SectionButtons />
                  </ComboRow>
                  <ComboRow label="Материал:" value="S 235" width="w-[105px]">
                    <IconButton name="info" />
                    <label className="ml-[13px] flex items-center gap-[3px] text-[#6d6d6d]">
                      <input type="checkbox" disabled className="h-[13px] w-[13px] appearance-none border border-[#c8c8c8] bg-white" />
                      Разные материалы
                    </label>
                  </ComboRow>
                  <ComboRow label="Полка лев.:" value="" width="w-[105px]" disabled>
                    <IconButton name="infoOff" disabled />
                  </ComboRow>
                  <ComboRow label="Полка прав.:" value="" width="w-[105px]" disabled>
                    <IconButton name="infoOff" disabled />
                  </ComboRow>
                </div>
              </Group>
              <Group title="Балка, правая сторона" className="mb-[10px]">
                <div className="flex flex-col gap-3 px-[2px] pt-[5px] pb-[9px]">
                  <ComboRow label="Сечение:" value="IPE 300 (ohne Norm)" width="w-[159px]">
                    <SectionButtons />
                  </ComboRow>
                  <ComboRow label="Материал:" value="S 235" width="w-[105px]">
                    <IconButton name="info" />
                  </ComboRow>
                </div>
              </Group>
              <Group title="Балка, левая сторона" cut className="mb-[8px]">
                <div className="flex flex-col gap-3 px-[2px] pt-[5px] pb-[8px]">
                  <ComboRow label="Сечение:" value="TS 300/160/15/10/3" width="w-[162px]">
                    <SectionButtons />
                  </ComboRow>
                  <ComboRow label="Материал:" value="S 235" width="w-[105px]">
                    <IconButton name="info" />
                  </ComboRow>
                </div>
              </Group>
              <Group title="Примечание" className="mb-[5px] flex-1">
                <div className="relative flex flex-1 border-l border-[#a9a9a9]">
                  <textarea
                    aria-label="Примечание"
                    readOnly
                    className="h-full w-full resize-none overflow-hidden bg-[#f0f0f0] pt-px pl-px leading-[13px]"
                    value={'Левая балка:\nСечение не является двутавром'}
                  />
                  <ChevronUp size={12} className="absolute top-[4px] right-[4px] text-[#a0a0a0]" />
                </div>
              </Group>
            </div>
            <div className="flex min-w-0 flex-1 flex-col">
              <div className="border border-[#dbe5f4] border-b-[#a6a6ea] pt-px pr-px pb-[2px]">
                <JointView />
                <div className="mt-[2px] flex justify-end gap-[2px] pr-[4px]">
                  {['axisY', 'axisZ', 'cube', 'zoomOff'].map(name => (
                    <button key={name} aria-label={name} className={`${grayButton} h-[22px] w-[25px]`}>
                      <Glyph name={name} />
                    </button>
                  ))}
                </div>
              </div>
              <Group title="Сечение - правый" className="mt-[10px] flex-1" />
            </div>
          </div>
        </div>
      </div>
      <div className="flex h-[40px] shrink-0 items-center border-t border-b border-[#a0a0a0] bg-[#f0f0f0] pt-[3px] pl-[9px]">
        <button aria-label="Справка" className={`${grayButton} h-[22px] w-[25px]`}><Glyph name="help" /></button>
        <button aria-label="Назад" className={`${grayButton} mr-[5px] ml-[9px] h-[22px] w-[25px]`}><Glyph name="pagePrev" /></button>
        <button aria-label="Вперед" className={`${grayButton} h-[22px] w-[25px]`}><Glyph name="pageNext" /></button>
        <button className={`${grayButton} mr-[8px] ml-[82px] h-[22px] w-[82px]`}>Вычисление</button>
        <button className={`${grayButton} h-[22px] w-[82px]`}>Подробности</button>
      </div>
      <div className="h-[22px] shrink-0 bg-[#f0f0f0]" />
    </div>
  );
}

/* ---------- section library window ---------- */

const circle = 'M3 9a6 6 0 1 0 12 0a6 6 0 1 0-12 0z';
const iShape = 'M5 2H13M5 16H13M9 2V16';
const lShape = 'M4 3V14H15';
const zShape = 'M3 2H8V16H14';

type Shape = { d: string; f?: string; live?: boolean; focus?: boolean };

const rolled: Shape[] = [
  { d: iShape, live: true, focus: true },
  { d: 'M12 2H6V16H12' },
  { d: 'M3 3H15M9 3V14', f: 'M4 3h10l-4 3-1 8-1-8z' },
  { d: lShape },
  { d: 'M6 2H12L13 3V15L12 16H6L5 15V3Z' },
  { d: circle },
  { d: 'M5.500 9a3.500 5.500 0 1 0 7 0a3.500 5.500 0 1 0-7 0z' },
  { d: lShape },
  { d: zShape },
  { d: 'M2 14H16', f: 'M4 6q0-3 5-3t5 3l-1 3h-2v3l4 2H3l4-2V9H5z' },
  { d: 'M1 7H4L6 11L9 7L12 11L14 7H17' },
  { d: '', f: 'M6 6a3 3 0 1 0 6 0a3 3 0 1 0-6 0zM5 13h8v2H5z' },
];

const builtUp: Shape[] = [
  { d: 'M2 2H8M2 16H8M5 2V16M10 2H16M10 16H16M13 2V16' },
  { d: 'M2 2H8M2 16H8M7 2V16M16 2H10M16 16H10M11 2V16' },
  { d: 'M2 6V2H16V6M5 5H13M9 5V16M5 16H13' },
  { d: 'M2 6H7V12M16 6H11V12', f: 'M4 6h3v3zM14 6h-3v3z' },
  { d: 'M2 3H7V16M16 3H11V16', f: 'M4 3h3v4zM14 3h-3v4z' },
  { d: 'M3 2H11M3 16H11M7 2V16M13 2V16' },
  { d: 'M5 2H13M5 16H13M9 2V16M4 12.500H14', live: true },
  { d: 'M3 2H15M5 5H13M9 5V16M4 16H14' },
  { d: 'M5 2H13M5 16H13M9 2V6M9 8V10M9 12V16' },
  { d: 'M4 4H14M9 2V16M5 16H13', f: 'M7 1h5v3H7z' },
  { d: 'M5 2H13M5 16H13M9 4V7M9 9V14' },
  { d: 'M1 2H7M1 16H7M4 2V16M9 2H17M9 16H17M11 9a2 2 0 1 0 4 0a2 2 0 1 0-4 0z' },
  { d: '', f: 'M1 9a3 3 0 1 0 6 0a3 3 0 1 0-6 0zM10 9a3 3 0 1 0 6 0a3 3 0 1 0-6 0z' },
  { d: 'M3 2H15M9 5V16H6M6 5H10' },
];

const thinWalled: Shape[] = [
  { d: 'M3 2H15M4 16H14M9 2V16', live: true },
  { d: 'M3 2H15M5 16H13M9 2V16', live: true },
  { d: 'M4 2H14M5 16H11M8 2V16' },
  { d: 'M3 2H15M9 2V16' },
  { d: 'M3 3H14M7 3V16' },
  { d: lShape },
  { d: 'M6 2V16H13' },
  { d: 'M5 2H13V16H5Z' },
  { d: 'M14 2H5V16H14' },
  { d: 'M4 3H14M9 2V16M4 14H14', f: 'M6 1h6v2H6zM6 14h6v2H6z' },
  { d: 'M4 5V2H14V5M9 2V16M5 16H13' },
  { d: 'M4 2H14M5 3L9 8L13 3M9 3V16M5 16H13' },
  { d: circle },
  { d: 'M3 3H15M5 4L7 14H11L13 4' },
  { d: 'M2 2H16M2 15H16M6 2V15M12 2V15' },
  { d: 'M2 2H16M6 2V15H12V2' },
  { d: 'M2 2H16M3 15H15M5 2V15M13 2V15M6 10L9 3L12 10' },
  { d: 'M2 2H16M5 2V15H13V2M6 10L9 3L12 10' },
  { d: 'M2 2H16M6 2V16M12 2V16' },
  { d: 'M2 2H16M6 2V16M12 2V16M4 16H8M10 16H14' },
  { d: 'M4 2H14M9 2V16M3 11H15M6 16H12' },
  { d: 'M6 2H12M9 2V16M4 6H14M3 15H15' },
  { d: 'M9 4V14M4 9H14' },
  { d: '', f: 'M6 9a3 3 0 1 0 6 0a3 3 0 1 0-6 0z' },
  { d: '', f: 'M3 8h12v3H3z' },
  { d: 'M4 4H14M9 4V16M4 16H14', f: 'M7 1h5v3H7z' },
  { d: zShape },
  { d: 'M15 2H10V16H4' },
  { d: 'M3 3H15M9 3V16M6 16H12M7 6H11' },
  { d: 'M13 6V2H5V16H15V11' },
  { d: 'M12 2V5H5V11H14V16' },
  { d: 'M11 2V5H5V16H15V10' },
  { d: 'M14 5V2H5V4L9 9L5 14V16H14V13' },
  { d: 'M6 9a3 6 0 1 0 6 0a3 6 0 1 0-6 0z' },
  { d: 'M3 3H15L12 14H6Z' },
  { d: 'M7 3H12L15 6V11L12 15H7L3 11V6Z' },
];

const slab = 'M5 2H13V16H5Z';
const solidI = 'M3 2H15V6H11V12H15V16H3V12H7V6H3Z';
const solidT = 'M3 2H15V6H11V16H7V6H3Z';

const massive: Shape[] = [
  { d: slab },
  { d: solidT },
  { d: 'M7 2H11V12H15V16H3V12H7Z' },
  { d: solidI },
  { d: 'M3 2H15V6H11V12H13V16H5V12H7V6H3Z' },
  { d: 'M2 9a7 7 0 1 0 14 0a7 7 0 1 0-14 0z' },
  { d: 'M2 9a7 7 0 1 0 14 0a7 7 0 1 0-14 0zM5 9a4 4 0 1 0 8 0a4 4 0 1 0-8 0z' },
  { d: 'M4 2H14V16H4ZM7 5H11V13H7Z' },
  { d: 'M4 2H14L11 16H7Z' },
  { d: 'M2 5H6V9H12V5H16V14H2Z' },
  { d: 'M5 2H13V5L11 7V10L15 13V16H3V13L7 10V7L5 5Z' },
  { d: 'M5 2H13V5L11 7V16H7V7L5 5Z' },
  { d: 'M2 2H16V6H9V15H5V7H2Z' },
  { d: 'M6 2H9V10H15V14H2V10H6Z' },
  { d: 'M2 3H11V11H17V14H8V6H2Z' },
  { d: 'M16 3H8V11H2V14H11V6H16Z' },
  { d: 'M2 4H16V8H14V14H11V8H8V14H5V8H2Z' },
  { d: 'M2 4H16V8H14L13 14H10V8H8V14H5L4 8H2Z' },
  { d: 'M2 4H16V8H14L13 14H10L9 8L8 14H5L4 8H2Z' },
  { d: 'M5 5H13a3 3 0 0 1 0 8H5a3 3 0 0 1 0-8z' },
  { d: 'M2 4H16V7H14L11 13H7L5 7H2Z' },
  { d: 'M2 4H16V7H14L10 13H8L5 7H2Z' },
  { d: 'M4 2H14V16H4ZM6 9a3 5 0 1 0 6 0a3 5 0 1 0-6 0z' },
  { d: 'M3 2H15V5L11 9L15 13V16H3V13L7 9L3 5Z' },
  { d: 'M4 2H8V16H4ZM10 2H14V16H10Z' },
  { d: 'M2 2H6V16H2ZM7 2H11V16H7ZM12 2H16V16H12Z' },
  { d: 'M3 2H15V5L11 9L15 13V16H3V13L7 9L3 5Z' },
];

const timber: Shape[] = [
  { d: slab },
  { d: 'M2 9a7 7 0 1 0 14 0a7 7 0 1 0-14 0z' },
  { d: 'M7 4a5 5 0 0 0 0 11zM11 4a5 5 0 0 1 0 11zM7 4H11V15H7Z' },
  { d: 'M3 2H8V16H3ZM10 2H15V16H10Z' },
  { d: 'M2 2H6V16H2ZM7 2H11V16H7ZM12 2H16V16H12Z' },
  { d: 'M2 2H4V16H2ZM6 2H8V16H6ZM10 2H12V16H10ZM14 2H16V16H14Z' },
  { d: 'M4 5H7V13H4ZM7 2H11V16H7ZM11 5H14V13H11Z' },
  { d: 'M3 5H5V13H3ZM5 2H8V16H5ZM8 5H10V13H8ZM10 2H13V16H10ZM13 5H15V13H13Z' },
  { d: solidT },
  { d: 'M3 2H7V6H3ZM7 2H11V16H7ZM11 2H15V6H11Z' },
  { d: 'M2 2H16V6H2ZM2 6H6V16H2ZM12 6H16V16H12Z' },
  { d: 'M2 2H6V16H2ZM6 2H12V6H6ZM12 2H16V16H12Z' },
  { d: 'M3 2H15V6H3ZM7 6H11V12H7ZM5 12H13V16H5Z' },
  { d: 'M3 2H7V6H3ZM7 2H11V16H7ZM11 2H15V6H11ZM5 12H7V16H5ZM11 12H13V16H11Z' },
  { d: 'M2 2H16V6H2ZM5 6H7V12H5ZM11 6H13V12H11ZM3 12H15V16H3Z' },
  { d: 'M2 2H5V6H2ZM5 2H8V16H5ZM8 2H10V6H8ZM10 2H13V16H10ZM13 2H16V6H13ZM3 12H5V16H3ZM8 12H10V16H8ZM13 12H15V16H13Z' },
  { d: 'M2 2H16V6H2ZM2 12H16V16H2ZM2 6H6V12H2ZM12 6H16V12H12Z' },
  { d: 'M2 2H6V16H2ZM12 2H16V16H12ZM6 2H12V6H6ZM6 12H12V16H6Z' },
  { d: 'M2 2H5V16H2ZM8 2H10V16H8ZM13 2H16V16H13ZM5 2H8V4H5ZM10 2H13V4H10ZM5 14H8V16H5ZM10 14H13V16H10Z' },
  { d: 'M2 2H16V5H2ZM2 13H16V16H2ZM3 5H6V13H3ZM8 5H10V13H8ZM12 5H15V13H12Z' },
  { d: 'M2 2H8V8H2ZM10 2H16V8H10ZM2 10H8V16H2ZM10 10H16V16H10Z' },
  { d: 'M4 2H8V5H4ZM10 2H14V5H10ZM4 7H8V11H4ZM10 7H14V11H10ZM4 13H8V16H4ZM10 13H14V16H10Z' },
  { d: 'M2 3H16M2 15H16M5 3H13V6H11V12H13V15H5V12H7V6H5Z' },
  { d: 'M4 2H14L11 16H7Z' },
  { d: 'M5 4H13V8H5ZM5 8H13V12H5ZM5 12H13V15H5Z' },
  { d: 'M6 2H13V5H6ZM6 5H13V8H6ZM6 8H13V11H6ZM6 11H13V14H6ZM6 14H13V16H6Z' },
];

const standardTimber: Shape[] = [
  { d: slab },
  { d: 'M2 4H8V6H6V12H8V14H2V12H4V6H2ZM10 4H16V14H10ZM12 6H14V12H12Z' },
  { d: 'M2 2H7V16H2ZM7 2H11V16H7ZM11 2H16V16H11Z' },
];

function SectionButton({ shape, solid }: { shape: Shape; solid?: boolean }) {
  const stroke = shape.live ? '#00007f' : solid ? '#a3a397' : '#7d7d75';
  return (
    <button
      disabled={!shape.live}
      aria-label="Сечение"
      className={`flex h-[31px] w-[37px] items-center justify-center ${
        shape.focus
          ? 'border-2 border-[#0078d7] bg-[#e1e1e1] outline-1 -outline-offset-3 outline-dotted'
          : shape.live
            ? 'border border-[#adadad] bg-[#e1e1e1]'
            : 'border border-[#bfbfbf] bg-[#cccccc]'
      }`}
    >
      <svg
        viewBox={solid ? '1.5 0.5 17 17' : '1 0 17 17'}
        className="h-[17px] w-[17px] overflow-visible"
        fill="none"
        strokeWidth={shape.live ? 2 : solid ? 1 : 1.5}
      >
        {shape.f && <path d={shape.f} fill="#8d8d86" />}
        <path d={shape.d} stroke={stroke} fill={solid ? '#bdbdb2' : 'none'} fillRule="evenodd" />
      </svg>
    </button>
  );
}

function SectionGrid({ shapes, solid }: { shapes: Shape[]; solid?: boolean }) {
  return (
    <div className="grid auto-rows-[38px_37px_37px_38px_37px] grid-cols-[43px_44px_43px_37px] pt-[5px] pl-[3px]">
      {shapes.map((shape, i) => (
        <SectionButton key={i} shape={shape} solid={solid} />
      ))}
    </div>
  );
}

function GlyphButton({ name }: { name: string }) {
  return (
    <button aria-label={name} disabled className="flex h-[31px] w-[37px] items-center justify-center border border-[#bfbfbf] bg-[#cccccc]">
      <Glyph name={name} />
    </button>
  );
}

function LibraryDialog() {
  return (
    <div className="absolute top-[584px] left-[705px] flex h-[518px] w-[742px] flex-col border border-[#5a5a5a] bg-[#f0f0f0] font-['Liberation_Sans',Arial,sans-serif] text-[11px] text-black shadow-[0_2px_10px_rgba(0,0,0,0.5)]">
      <div className="flex h-[24px] shrink-0 items-center bg-white pr-[7px] pb-[2px] pl-[3px]">
        <h2 className="font-['Open_Sans','Noto_Sans',sans-serif]">База данных сечений</h2>
        <button aria-label="Закрыть" className="ml-auto">
          <X size={15} strokeWidth={1.5} />
        </button>
      </div>
      <div className="mt-[8px] grid h-[362px] grid-cols-4 gap-x-[9px] px-[8px]">
        <div className="flex flex-col gap-[10px]">
          <Group title="Прокатные" cut className="relative flex-1">
            <SectionGrid shapes={rolled} />
            <div className="pointer-events-none absolute top-[17px] -left-px h-[41px] w-[46px] border-3 border-[#ed1c24]" />
          </Group>
          <Group title="Сборные" cut className="relative h-[175px]">
            <SectionGrid shapes={builtUp} />
            <div className="pointer-events-none absolute top-[56px] left-[87px] h-[39px] w-[45px] border-3 border-[#ed1c24]" />
          </Group>
        </div>
        <Group title="Параметрическ. - тонкостенные" cut className="relative">
          <SectionGrid shapes={thinWalled} />
          <div className="pointer-events-none absolute top-[15px] left-0 h-[46px] w-[88px] border-3 border-[#ed1c24]" />
        </Group>
        <Group title="Параметрические - массивные" cut>
          <SectionGrid shapes={massive} solid />
        </Group>
        <div className="flex flex-col gap-[10px]">
          <Group title="Параметрические - деревянные" cut className="flex-1">
            <SectionGrid shapes={timber} solid />
          </Group>
          <Group title="Стандартные - древесина" cut className="h-[64px]">
            <SectionGrid shapes={standardTimber} solid />
          </Group>
        </div>
      </div>
      <div className="mt-[10px] grid h-[62px] grid-cols-4 gap-x-[9px] px-[8px]">
        <div className="col-span-2 border border-[#dbe5f4] border-r-[#a6a6ea] border-b-[#a6a6ea] bg-[#f0f4fa]" />
        <Group title="Заданное пользователем" cut>
          <div className="flex gap-[6px] pt-[5px] pl-[3px]">
            <GlyphButton name="folderBack" />
            <GlyphButton name="editSheet" />
          </div>
        </Group>
        <Group title="Из программы для сечений" cut>
          <div className="flex gap-[6px] pt-[5px] pl-[3px]">
            <GlyphButton name="profile" />
            <GlyphButton name="hollow" />
          </div>
        </Group>
      </div>
      <div className="mx-[8px] mt-[8px] h-[2px] border-t border-[#a0a0a0] bg-white" />
      <div className="flex flex-1 items-center px-[9px] pt-[2px]">
        <button aria-label="Справка" className={`${grayButton} h-5 w-[25px]`}><Glyph name="help" /></button>
        <button aria-label="Поиск" disabled className="ml-[9px] flex h-5 w-[25px] items-center justify-center border border-[#bfbfbf] bg-[#cccccc]">
          <Glyph name="finder" />
        </button>
        <button className={`${grayButton} ml-auto h-[21px] w-[73px]`}>Отмена</button>
      </div>
    </div>
  );
}

/* ---------- page ---------- */

export default function App() {
  return (
    <div className="relative flex min-h-screen flex-col overflow-hidden bg-[#cfd4de] font-['Open_Sans','Noto_Sans',sans-serif] text-[11px] leading-4">
      <MainHeader />
      <main className="flex flex-1">
        <Navigator />
        <div className="ml-[4px] flex min-w-0 flex-1 flex-col">
          <svg className="w-full flex-1 border-t border-l border-[#696969] bg-[#fdfdfd]">
            <defs>
              <pattern id="dots" width="33" height="33" patternUnits="userSpaceOnUse" x="22" y="13">
                <path d="M0 .5h1" stroke="#b5b5b5" />
              </pattern>
            </defs>
            <rect width="100%" height="100%" fill="url(#dots)" />
            <path d="M0 370.500H2000" stroke="#2f9a94" />
          </svg>
          <div className="h-[6px]" />
          <LoadTable />
        </div>
      </main>
      <footer className="flex h-[22px] items-center justify-end gap-[2px] border-t border-[#a0a4ae] bg-gradient-to-b from-[#dfe2e8] via-[#a9aeba] to-[#bcc0ca] pr-[44px] text-[12px] text-[#333a48]">
        {['ФИКС', 'СЕТКА', 'ДЕКАРТ', 'ФИКОБ', 'НАПИН', 'DXF'].map(mode => (
          <button key={mode} className="h-[18px] border-t border-r border-b border-l border-white border-t-black border-l-black px-px leading-4">
            {mode}
          </button>
        ))}
      </footer>

      <JointDialog />

      <svg className="pointer-events-none absolute top-[460px] left-[670px] h-[126px] w-[80px]">
        <path d="M9 4L59 104" stroke="#ed1c24" strokeWidth="4" strokeLinecap="round" />
        <path d="M68 125L43 111L71 97Z" fill="#ed1c24" />
      </svg>

      <LibraryDialog />
    </div>
  );
}
